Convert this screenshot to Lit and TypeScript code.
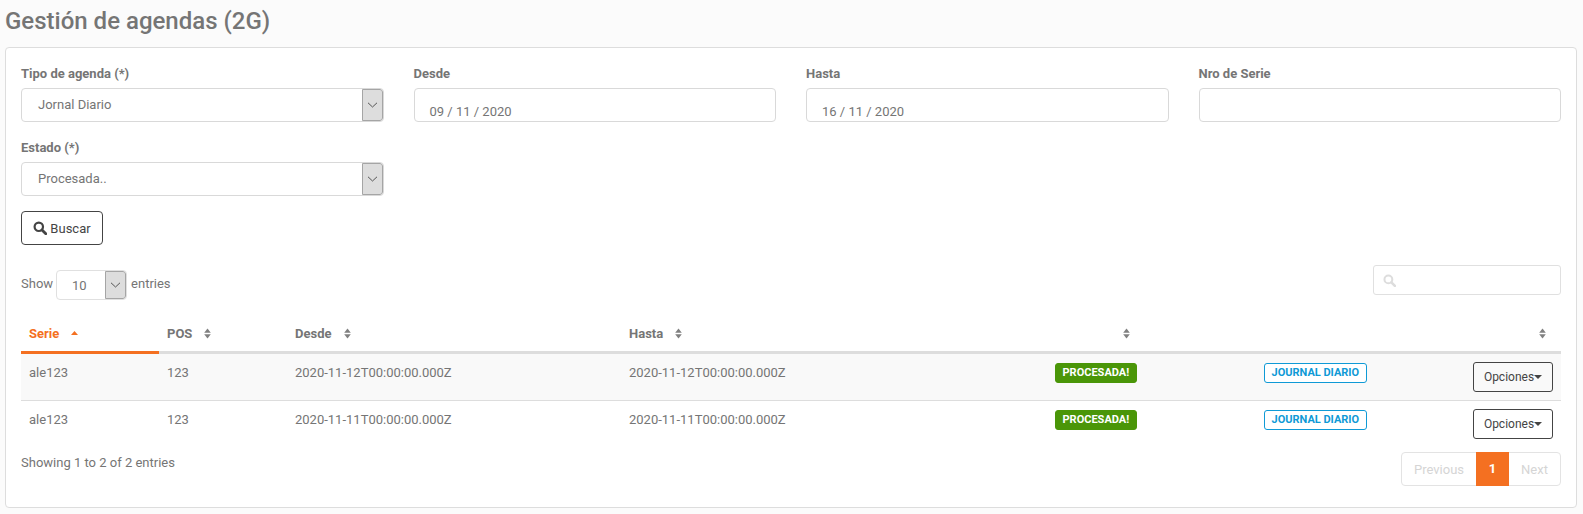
import { LitElement, html, css, svg } from "lit";
import { customElement } from "lit/decorators.js";

const chevron = html`<svg class="chev" width="11" height="6" viewBox="0 0 11 6"><path d="M1 .8l4.5 4.2L10 .8" fill="none" stroke="#555" stroke-width="1"/></svg>`;
const search = (c: string, s: number) => html`<svg width=${s} height=${s} viewBox="0 0 14 14"><circle cx="5.8" cy="5.8" r="4.2" fill="none" stroke=${c} stroke-width="2.2"/><path d="M9 9l3.8 3.8" stroke=${c} stroke-width="2.8" stroke-linecap="round"/></svg>`;
const sortIcon = svg`<path d="M.2 4.7L3.5.4l3.3 4.3z" fill="#808080"/><path d="M.2 6.3l3.3 4.3 3.3-4.3z" fill="#808080"/>`;

@customElement("app-root")
export class AppRoot extends LitElement {
  static styles = css`
    :host { display: block; height: 514px; background: #fbfbfb; font-family: Roboto, "Liberation Sans", sans-serif; font-size: 13px; color: #757575; box-sizing: border-box; padding: 0 6px 0 5px; overflow: hidden; }
    * { box-sizing: border-box; }
    h1 { margin: 0; height: 47px; padding: 6px 0 0 0; font-size: 24px; line-height: 30px; font-weight: 500; color: #757575; }
    .card { height: 461px; background: #fff; border: 1px solid #ddd; border-radius: 4px; padding: 15px; display: flex; flex-direction: column; }
    .fields { display: grid; grid-template-columns: repeat(4, 1fr); column-gap: 30px; flex: none; }
    .field { height: 74px; display: flex; flex-direction: column; }
    .field label { height: 25px; padding-top: 3px; line-height: 16px; font-weight: 700; font-size: 13px; color: #757575; }
    .control { height: 34px; border: 1px solid #d9d9d9; border-radius: 4px; background: #fff; display: flex; align-items: stretch; overflow: hidden; }
    .sel-text { flex: 1; padding: 0 16px; line-height: 32px; }
    .arrow { width: 21px; background: #ddd; border: 1px solid #a5a5a5; border-radius: 0 3px 3px 0; display: flex; align-items: center; justify-content: center; }
    .date { padding: 13px 15px 0; line-height: 20px; }
    .btn { flex: none; width: 82px; height: 34px; border: 1px solid #444; border-radius: 4px; background: #fff; color: #444; font: inherit; display: flex; align-items: center; justify-content: center; gap: 3px; padding: 0; }
    .tools { flex: none; display: flex; justify-content: space-between; height: 52px; margin-top: 20px; }
    .show { display: flex; align-items: flex-start; gap: 3px; line-height: 28px; margin-top: 5px; }
    .len { width: 71px; height: 30px; border: 1px solid #e0e0e0; border-radius: 4px; display: flex; overflow: hidden; margin-right: 1px; }
    .len span { flex: 1; padding-left: 15px; line-height: 30px; }
    .filter { width: 188px; height: 30px; border: 1px solid #e0e0e0; border-radius: 3px; display: flex; align-items: center; padding-left: 9px; }
    table { flex: none; width: 100%; border-collapse: collapse; table-layout: fixed; }
    th { height: 35px; padding: 0 8px; text-align: left; font-weight: 700; border-bottom: 3px solid #ddd; white-space: nowrap; line-height: 16px; }
    th.on { color: #f47021; border-bottom-color: #f47021; }
    th svg { margin-left: 12px; vertical-align: -1px; }
    td { height: 48px; padding: 9px 8px 0; vertical-align: top; border-bottom: 1px solid #ddd; line-height: 20px; }
    tr:last-child td { border-bottom: 0; height: 47px; }
    tr.odd td { background: #f9f9f9; }
    th.sort-5 svg { margin-left: 68px; }
    th.sort-7 svg { margin-left: 66px; }
    .badge { display: inline-block; height: 20px; padding: 0 6.5px; border-radius: 3px; font-size: 11px; font-weight: 700; line-height: 18px; border: 1px solid; vertical-align: top; white-space: nowrap; }
    .ok { background: #4a9608; border-color: #4a9608; color: #fff; }
    .jd { background: #fff; border-color: #0f9ad6; color: #0f9ad6; }
    .opt { width: 80px; height: 30px; margin-top: -1px; border: 1px solid #444; border-radius: 3px; background: transparent; color: #444; font: inherit; font-size: 12px; padding: 0; display: flex; align-items: center; justify-content: center; }
    .caret { width: 0; height: 0; border: 4px solid transparent; border-top-color: #444; border-bottom: 0; }
    .foot { flex: none; display: flex; justify-content: space-between; align-items: flex-start; margin-top: 5px; }
    .info { line-height: 20px; margin-top: 1px; }
    .pager { display: flex; height: 34px; border: 1px solid #e3e3e3; border-radius: 4px; color: #d5d5d5; line-height: 34px; }
    .pager span { display: block; text-align: center; }
    .prev { width: 74px; } .next { width: 51px; }
    .pager .cur { width: 33px; margin: -1px 0; height: 34px; background: #f47021; color: #fff; font-weight: 700; }
  `;

  private sel(t: string) {
    return html`<div class="control"><div class="sel-text">${t}</div><div class="arrow">${chevron}</div></div>`;
  }
  private th(t: string, cls = "") {
    return html`<th class=${cls}>${t}<svg width="7" height="11" viewBox="0 0 7 11">${sortIcon}</svg></th>`;
  }
  private row(odd: boolean, d: string) {
    return html`<tr class=${odd ? "odd" : ""}>
      <td>ale123</td><td>123</td><td>${d}</td><td>${d}</td>
      <td><span class="badge ok">PROCESADA!</span></td>
      <td><span class="badge jd">JOURNAL DIARIO</span></td>
      <td><button class="opt">Opciones<span class="caret"></span></button></td>
    </tr>`;
  }
  render() {
    return html`
      <h1>Gestión de agendas (2G)</h1>
      <div class="card">
        <div class="fields">
          <div class="field"><label>Tipo de agenda (*)</label>${this.sel("Jornal Diario")}</div>
          <div class="field"><label>Desde</label><div class="control date">09 / 11 / 2020</div></div>
          <div class="field"><label>Hasta</label><div class="control date">16 / 11 / 2020</div></div>
          <div class="field"><label>Nro de Serie</label><div class="control"></div></div>
          <div class="field"><label>Estado (*)</label>${this.sel("Procesada..")}</div>
        </div>
        <button class="btn">${search("#444", 14)}Buscar</button>
        <div class="tools">
          <div class="show">Show <div class="len"><span>10</span><div class="arrow">${chevron}</div></div> entries</div>
          <div class="filter">${search("#ddd", 13)}</div>
        </div>
        <table>
          <colgroup><col style="width:138px"><col style="width:128px"><col style="width:334px"><col style="width:426px"><col style="width:209px"><col style="width:209px"><col></colgroup>
          <thead><tr>
            <th class="on">Serie<svg width="7" height="11" viewBox="0 0 7 11"><path d="M0 7L3.5 3 7 7z" fill="#f47021"/></svg></th>
            ${this.th("POS")}${this.th("Desde")}${this.th("Hasta")}${this.th("", "sort-5")}<th></th>${this.th("", "sort-7")}
          </tr></thead>
          <tbody>${this.row(true, "2020-11-12T00:00:00.000Z")}${this.row(false, "2020-11-11T00:00:00.000Z")}</tbody>
        </table>
        <div class="foot">
          <div class="info">Showing 1 to 2 of 2 entries</div>
          <div class="pager"><span class="prev">Previous</span><span class="cur">1</span><span class="next">Next</span></div>
        </div>
      </div>`;
  }
}
